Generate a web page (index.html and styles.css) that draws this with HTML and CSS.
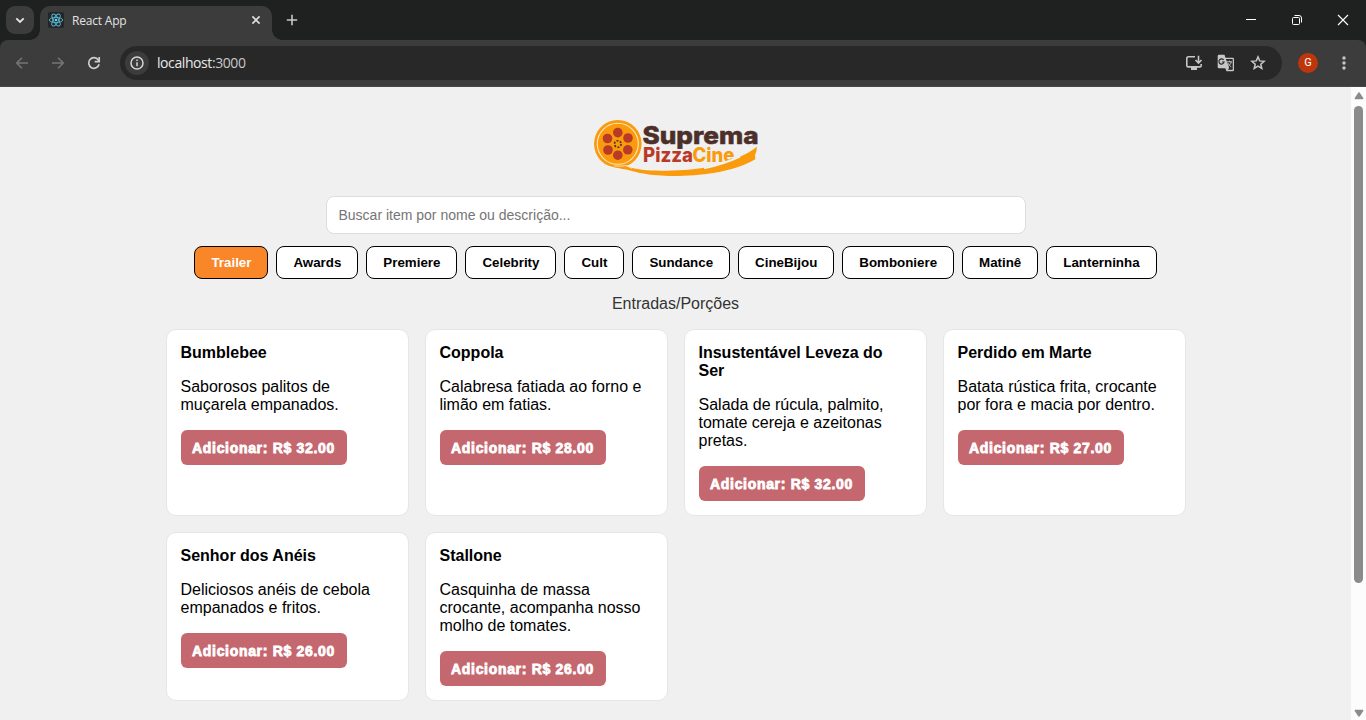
FILE: index.html
```html
<!DOCTYPE html>
<html lang="pt-BR">
<head>
<meta charset="utf-8">
<title>React App</title>
<link rel="stylesheet" href="styles.css">
</head>
<body>
<div class="window">
  <header class="tabstrip">
    <div class="tab-search"><svg width="10" height="7" viewBox="0 0 10 7"><path d="M1.3 1.3 5 5l3.700-3.700" fill="none" stroke="#e6e6e6" stroke-width="1.8"/></svg></div>
    <div class="tab">
      <span class="favicon"><svg width="16" height="16" viewBox="0 0 16 16"><g fill="none" stroke="#58b8d4" stroke-width=".9"><ellipse cx="8" cy="8" rx="6.7" ry="2.600"/><ellipse cx="8" cy="8" rx="6.700" ry="2.600" transform="rotate(60 8 8)"/><ellipse cx="8" cy="8" rx="6.700" ry="2.600" transform="rotate(120 8 8)"/></g><circle cx="8" cy="8" r="1.300" fill="#61dafb"/></svg></span>
      <span class="tab-title">React App</span>
      <svg width="10" height="10" viewBox="0 0 10 10"><path d="M1.400 1.400l7.200 7.200M8.600 1.400 1.400 8.600" stroke="#dedede" stroke-width="1.600"/></svg>
    </div>
    <svg class="new-tab" width="12" height="12" viewBox="0 0 12 12"><path d="M6 .8v10.400M.8 6h10.400" stroke="#c7c7c7" stroke-width="1.600"/></svg>
    <div class="win-controls">
      <svg width="12" height="12" viewBox="0 0 12 12"><path d="M1 5.500h10" stroke="#fff"/></svg>
      <svg width="12" height="12" viewBox="0 0 12 12"><g fill="none" stroke="#fff"><rect x="1.500" y="3.500" width="7" height="7" rx="1"/><path d="M3.500 1.500h4.500a2.500 2.500 0 0 1 2.500 2.500v4.500"/></g></svg>
      <svg width="12" height="12" viewBox="0 0 12 12"><path d="M1 1l10 10M11 1 1 11" stroke="#fff" stroke-width="1.100"/></svg>
    </div>
  </header>
  <div class="toolbar">
    <div class="nav">
      <svg width="16" height="16" viewBox="0 0 16 16"><path d="M14 8H3M8 2.700 2.700 8 8 13.300" fill="none" stroke="#757575" stroke-width="1.600"/></svg>
      <svg width="16" height="16" viewBox="0 0 16 16"><path d="M2 8h11M8 2.700 13.300 8 8 13.300" fill="none" stroke="#757575" stroke-width="1.600"/></svg>
      <svg width="16" height="16" viewBox="0 0 16 16"><path d="M13.100 9.300A5.300 5.300 0 1 1 12.300 4.900L13 6" fill="none" stroke="#cfcfcf" stroke-width="1.700"/><path d="M13.200 2v4.600H8.700" fill="none" stroke="#cfcfcf" stroke-width="1.700"/></svg>
    </div>
    <div class="address">
      <span class="site-info"><svg width="14" height="14" viewBox="0 0 14 14"><circle cx="7" cy="7" r="6" fill="none" stroke="#d5d5d5" stroke-width="1.500"/><path d="M7 6.200v4M7 3.500v1.500" stroke="#d5d5d5" stroke-width="1.500"/></svg></span>
      <span class="url">localhost<span class="port">:3000</span></span>
      <span class="address-icons">
        <svg width="18" height="16" viewBox="0 0 18 16"><path d="M10 1.800H3.200a1.400 1.400 0 0 0-1.400 1.400v7.300a1.400 1.400 0 0 0 1.400 1.400h11.600a1.400 1.400 0 0 0 1.400-1.400V9M13.500.8v6.700M10.500 5l3 3 3-3" fill="none" stroke="#c7c7c7" stroke-width="1.600"/><path d="M6 12h6v3H6z" fill="#c7c7c7"/></svg>
        <svg width="18" height="18" viewBox="0 0 18 18"><path d="M2 .8h5.500l1 3h7.200A1.300 1.300 0 0 1 17 5.100v10.800a1.300 1.300 0 0 1-1.300 1.300H9.500l-1.200-3H2A1.300 1.300 0 0 1 .7 12.900V2.100A1.300 1.300 0 0 1 2 .8z" fill="#c7c7c7"/><path d="M8.900 5.100h6.800v10.700h-5l1.500-1.700-1.100-3.300z" fill="#282828"/><path d="M10 7.800h5M12.500 6.600v1.200M14.200 8c-.3 1.700-1.300 2.900-2.700 3.900M11 9.100c.7 1.600 1.700 2.700 3.300 3.800" fill="none" stroke="#c7c7c7"/><path d="M6.600 5.900A2.600 2.600 0 1 0 7.100 8H4.900" fill="none" stroke="#282828" stroke-width="1.200"/></svg>
        <svg width="16" height="16" viewBox="0 0 16 16"><path d="M8 1.900l1.700 4 4.400.4-3.300 2.900 1 4.300L8 11.200l-3.800 2.300 1-4.300-3.300-2.900 4.400-.4z" fill="none" stroke="#c7c7c7" stroke-width="1.500"/></svg>
      </span>
    </div>
    <span class="avatar">G</span>
    <svg class="kebab" width="4" height="14" viewBox="0 0 4 14"><g fill="#c7c7c7"><circle cx="2" cy="2" r="1.700"/><circle cx="2" cy="7" r="1.700"/><circle cx="2" cy="12" r="1.700"/></g></svg>
  </div>
  <div class="viewport">
    <main class="page">
      <svg class="logo" width="164" height="56" viewBox="0 0 164 56">
        <circle cx="23.800" cy="23.800" r="23.800" fill="#f99b0c"/>
        <circle cx="23.800" cy="23.800" r="20.500" fill="none" stroke="#fbe6c2" stroke-width="1.100"/>
        <g fill="#b93a27"><circle cx="23.800" cy="12.600" r="4.800"/><circle cx="34" cy="18" r="4.800"/><circle cx="33.800" cy="29.800" r="4.800"/><circle cx="23.800" cy="35.200" r="4.800"/><circle cx="14" cy="30" r="4.800"/><circle cx="13.500" cy="18.500" r="4.800"/></g>
        <circle cx="23.800" cy="24" r="3.300" fill="none" stroke="#4b2f28" stroke-width="1.600" stroke-dasharray="2 1.455"/>
        <text class="logo-name" x="48.500" y="24" textLength="116" lengthAdjust="spacingAndGlyphs">Suprema</text>
        <text class="logo-sub" x="49" y="41.800" textLength="50" lengthAdjust="spacingAndGlyphs">Pizza</text>
        <text class="logo-sub cine" x="98.500" y="41.800" textLength="42" lengthAdjust="spacingAndGlyphs">Cine</text>
        <path d="M18 46.500Q25 47.500 31 45.800C45 51 62 51 78 50.500 112 50 143 42 163 26.700Q162.800 32 161 35L161.300 39.300C137 53 105 56 80 56 55 56 42 52 36 50.500 28 48.500 24 48.500 18 46.500z" fill="#f99b0c"/>
        <path d="M20 46Q28 46.500 32 45.500L38 48.300" fill="none" stroke="#fbe6c2" stroke-width=".9"/>
        <path d="M110 48.300Q130 44 146 36.500" fill="none" stroke="#f0f0f0" stroke-width="2"/>
      </svg>
      <input class="search" type="text" placeholder="Buscar item por nome ou descrição...">
      <nav class="categories">
        <button class="category active">Trailer</button>
        <button class="category">Awards</button>
        <button class="category">Premiere</button>
        <button class="category">Celebrity</button>
        <button class="category">Cult</button>
        <button class="category">Sundance</button>
        <button class="category">CineBijou</button>
        <button class="category">Bomboniere</button>
        <button class="category">Matinê</button>
        <button class="category">Lanterninha</button>
      </nav>
      <p class="subtitle">Entradas/Porções</p>
      <section class="items">
        <article class="card"><h3>Bumblebee</h3><p>Saborosos palitos de muçarela empanados.</p><button class="add">Adicionar: R$ 32.00</button></article>
        <article class="card"><h3>Coppola</h3><p>Calabresa fatiada ao forno e limão em fatias.</p><button class="add">Adicionar: R$ 28.00</button></article>
        <article class="card"><h3>Insustentável Leveza do Ser</h3><p>Salada de rúcula, palmito, tomate cereja e azeitonas pretas.</p><button class="add">Adicionar: R$ 32.00</button></article>
        <article class="card"><h3>Perdido em Marte</h3><p>Batata rústica frita, crocante por fora e macia por dentro.</p><button class="add">Adicionar: R$ 27.00</button></article>
        <article class="card"><h3>Senhor dos Anéis</h3><p>Deliciosos anéis de cebola empanados e fritos.</p><button class="add">Adicionar: R$ 26.00</button></article>
        <article class="card"><h3>Stallone</h3><p>Casquinha de massa crocante, acompanha nosso molho de tomates.</p><button class="add">Adicionar: R$ 26.00</button></article>
      </section>
    </main>
    <div class="scrollbar">
      <svg width="10" height="8" viewBox="0 0 10 8"><path d="M4.200.8q.8-.9 1.600 0L9.300 6q.4 1.200-.8 1.200h-7Q.3 7.200.7 6z" fill="#8b8b8b"/></svg>
      <div class="thumb"></div>
      <svg width="10" height="8" viewBox="0 0 10 8"><path d="M4.200 7.200q.8.900 1.600 0L9.300 2Q9.700.8 8.500.8h-7Q.3.800.7 2z" fill="#8b8b8b"/></svg>
    </div>
  </div>
</div>
</body>
</html>
```
FILE: styles.css
```css
* { box-sizing: border-box; }
body { margin: 0; font-family: "Liberation Sans", Arial, sans-serif; }
svg { display: block; flex: none; }
.window { height: 720px; display: flex; flex-direction: column; overflow: hidden; background: #1f2120; }

/* Browser frame */
.tabstrip { height: 40px; flex: none; display: flex; align-items: center; padding-left: 6px; }
.tab-search { width: 28px; height: 28px; border-radius: 9px; background: #3c3c3c; display: flex; align-items: center; justify-content: center; }
.tab { position: relative; width: 232px; height: 34px; margin: 6px 0 0 6px; padding: 0 11px 6px 8px; border-radius: 10px 10px 0 0; background: #3c3c3c; display: flex; align-items: center; }
.tab::before, .tab::after { content: ""; position: absolute; bottom: 0; width: 10px; height: 10px; }
.tab::before { left: -10px; background: radial-gradient(circle at 0 0, transparent 9.500px, #3c3c3c 10px); }
.tab::after { right: -10px; background: radial-gradient(circle at 100% 0, transparent 9.500px, #3c3c3c 10px); }
.favicon { background: #242526; border-radius: 2px; }
.tab-title { flex: 1; margin-left: 8px; font: 12px "Open Sans", sans-serif; letter-spacing: -.2px; color: #e3e3e3; }
.new-tab { margin-left: 14px; }
.win-controls { margin-left: auto; padding-right: 17px; display: flex; gap: 34px; }
.toolbar { height: 47px; flex: none; display: flex; align-items: center; padding-left: 14px; background: #3c3c3c; border-radius: 8px 8px 0 0; border-bottom: 1px solid #484848; }
.nav { display: flex; gap: 20px; margin-right: 18px; }
.address { width: 1162px; height: 34px; border-radius: 17px; background: #282828; display: flex; align-items: center; padding: 0 16px 0 5px; }
.site-info { width: 24px; height: 24px; border-radius: 50%; background: #3c3c3c; display: flex; align-items: center; justify-content: center; }
.url { margin-left: 8px; padding-bottom: 1px; font: 14px "Open Sans", sans-serif; letter-spacing: -.42px; color: #e8e8e8; }
.port { color: #c7c7c7; }
.address-icons { margin-left: auto; display: flex; align-items: center; gap: 15px; }
.address-icons svg:first-child { margin-right: -1px; }
.avatar { width: 20px; height: 20px; margin-left: 16px; border-radius: 50%; background: #bf360c; color: #fff; font: 11px/20px Roboto, sans-serif; text-align: center; }
.kebab { margin-left: 24px; }

/* Menu page */
.viewport { flex: 1; min-height: 0; display: flex; background: #f0f0f0; }
.page { flex: 1; min-width: 0; display: flex; flex-direction: column; align-items: center; padding-top: 33px; }
.logo { overflow: visible; }
.logo-name { font: 800 24px Inter, sans-serif; fill: #4b2f28; stroke: #4b2f28; stroke-width: .5px; }
.logo-sub { font: 800 19.500px Inter, sans-serif; fill: #b93a27; }
.logo-sub.cine { fill: #f99b0c; }
.search { width: 700px; height: 38px; margin: 20px 0 12px; padding: 0 12px; border: 1px solid #ddd; border-radius: 8px; background: #fff; font: 14px "Liberation Sans", Arial, sans-serif; }
.search::placeholder { color: #757575; }
.categories { display: flex; gap: 8px; }
.category { height: 33px; padding: 0 16px; border: 1px solid #000; border-radius: 8px; background: #fff; color: #000; font: bold 13.333px "Liberation Sans", Arial, sans-serif; white-space: nowrap; }
.category.active { background: #f98729; color: #fff; }
.subtitle { margin: 16px 0 16px; font-size: 16px; line-height: 18px; color: #333; }
.items { width: 1020px; display: grid; grid-template-columns: repeat(4, 1fr); gap: 16px; }
.card { padding: 14px; border: 1px solid #e6e6e6; border-radius: 10px; background: #fff; font-size: 16px; line-height: 18px; }
.card h3 { margin: 0; font-size: 16px; }
.card p { margin: 16px 0; }
.add { display: block; width: 166px; height: 35px; padding: 0; border: 0; border-radius: 6px; background: #c5676e; color: #fff; font: bold 14px "Liberation Sans", Arial, sans-serif; letter-spacing: .68px; -webkit-text-stroke: .8px #fff; white-space: nowrap; }
.scrollbar { width: 15px; flex: none; background: #fcfcfc; display: flex; flex-direction: column; align-items: center; padding: 5px 0 3px; }
.thumb { width: 9px; height: 477px; margin: 6px 0 auto; border-radius: 5px; background: #8b8b8b; }
```
